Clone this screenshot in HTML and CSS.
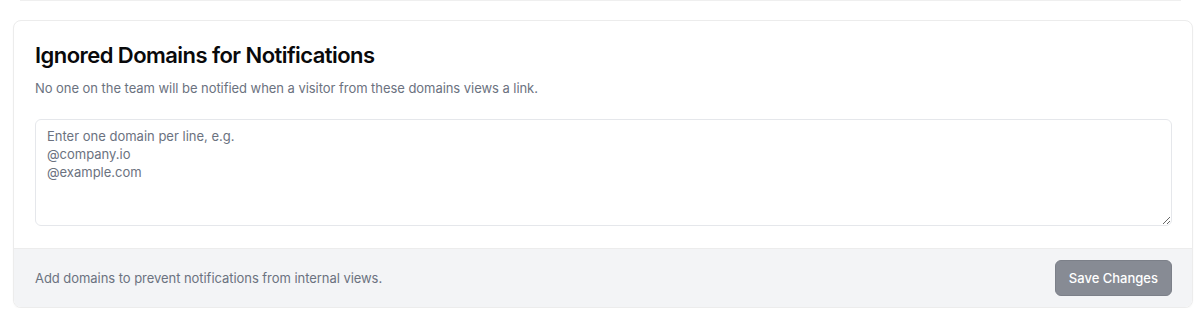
FILE: index.html
```html
<!DOCTYPE html>
<html lang="en">
<head>
  <meta charset="UTF-8">
  <meta name="viewport" content="width=device-width, initial-scale=1.0">
  <title>Ignored Domains for Notifications</title>
  <link rel="stylesheet" href="styles.css">
</head>
<body>
  <div class="prev-edge"></div>

  <form class="card">
    <div class="card-body">
      <h2>Ignored Domains for Notifications</h2>
      <p class="subtitle">No one on the team will be notified when a visitor from these domains views a link.</p>
      <textarea class="domains" placeholder="Enter one domain per line, e.g.&#10;@company.io&#10;@example.com"></textarea>
    </div>
    <div class="card-footer">
      <p class="hint">Add domains to prevent notifications from internal views.</p>
      <button type="button" class="save" disabled>Save Changes</button>
    </div>
  </form>
</body>
</html>
```

FILE: styles.css
```css
body {
  font-family: Inter, "Noto Sans", Arial, sans-serif;
  margin: 0;
  padding: 0 7px 0 13px;
  color: #0a0a0f;
  background-color: #fff;
}
.prev-edge {
  height: 1px;
  margin: 0 12px 19px 7px;
  background-color: #efefef;
}
.card {
  border: 1px solid #ececec;
  border-radius: 8px;
  background-color: #fff;
  box-shadow: 0 1px 2px rgba(0, 0, 0, 0.03);
  overflow: hidden;
}
.card-body {
  padding: 20px 20px 22px 21px;
}
h2 {
  margin: 0;
  font-size: 22px;
  line-height: 28px;
  font-weight: 600;
  letter-spacing: -0.55px;
  color: #09090b;
}
.subtitle {
  margin: 9px 0 0;
  font-size: 13px;
  line-height: 20px;
  letter-spacing: -0.05px;
  color: #6b7280;
}
.domains {
  display: block;
  box-sizing: border-box;
  width: 100%;
  height: 107px;
  margin-top: 21px;
  padding: 7px 11px;
  border: 1px solid #e5e7eb;
  border-radius: 6px;
  font-family: inherit;
  font-size: 13px;
  line-height: 18px;
  color: #111827;
  background-color: #fff;
  resize: vertical;
  outline: none;
}
.domains::placeholder {
  color: #6b7280;
}
.card-footer {
  display: flex;
  align-items: center;
  justify-content: space-between;
  padding: 11px 20px 11px 21px;
  border-top: 1px solid #ececec;
  background-color: #f3f4f6;
}
.hint {
  margin: 0;
  font-size: 13px;
  line-height: 20px;
  letter-spacing: -0.05px;
  color: #6b7280;
}
.save {
  height: 36px;
  padding: 0 13px;
  border: 1px solid #7c8089;
  border-radius: 6px;
  background-color: #878b94;
  color: #fff;
  font-family: inherit;
  font-size: 13px;
  font-weight: 500;
  cursor: not-allowed;
}
```
